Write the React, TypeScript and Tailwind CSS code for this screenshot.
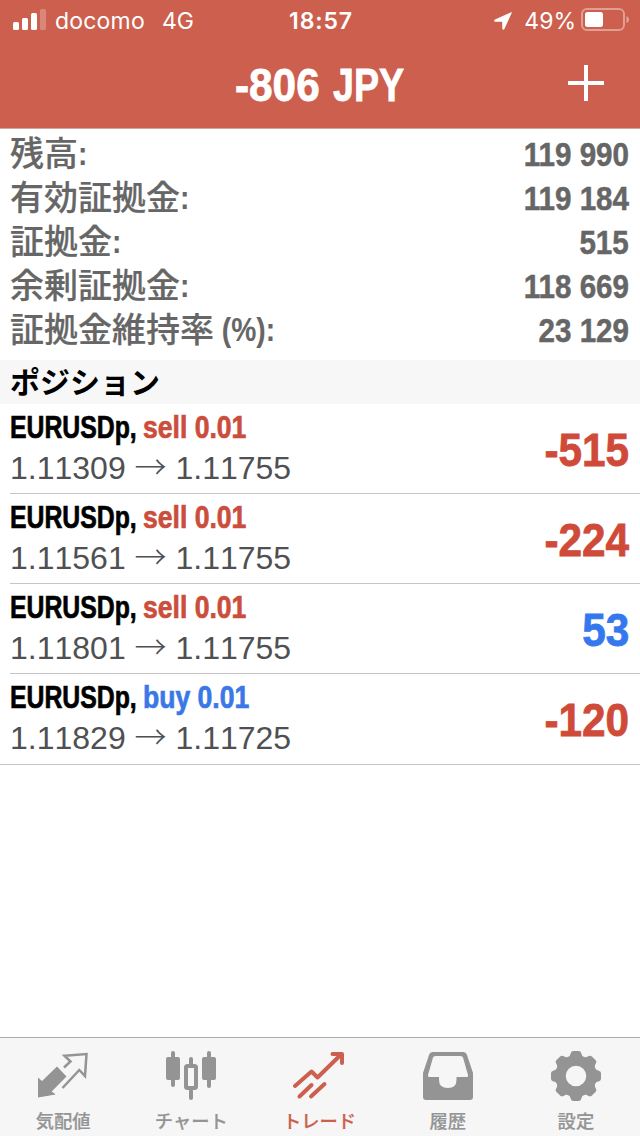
import React from 'react'

interface SummaryRow {
  label: string
  suffix: string
  value: string
}

interface Position {
  symbol: string
  side: 'sell' | 'buy'
  volume: string
  open: string
  current: string
  profit: number
}

const summary: SummaryRow[] = [
  { label: '残高', suffix: ':', value: '119 990' },
  { label: '有効証拠金', suffix: ':', value: '119 184' },
  { label: '証拠金', suffix: ':', value: '515' },
  { label: '余剰証拠金', suffix: ':', value: '118 669' },
  { label: '証拠金維持率', suffix: ' (%):', value: '23 129' },
]

const positions: Position[] = [
  { symbol: 'EURUSDp', side: 'sell', volume: '0.01', open: '1.11309', current: '1.11755', profit: -515 },
  { symbol: 'EURUSDp', side: 'sell', volume: '0.01', open: '1.11561', current: '1.11755', profit: -224 },
  { symbol: 'EURUSDp', side: 'sell', volume: '0.01', open: '1.11801', current: '1.11755', profit: 53 },
  { symbol: 'EURUSDp', side: 'buy', volume: '0.01', open: '1.11829', current: '1.11725', profit: -120 },
]

const StatusBar = () => (
  <div className="flex h-10 items-center justify-between pl-[13px] pr-[11px] font-['Inter',sans-serif] text-[23px]">
    <div className="flex w-[240px] items-center">
      <svg className="mr-[9px] h-[22px] w-[33px]" viewBox="0 0 33 22" fill="currentColor">
        <rect x="0" y="13" width="6" height="8" rx="1.5" />
        <rect x="9" y="9" width="6" height="12" rx="1.5" />
        <rect x="18" y="4" width="6" height="17" rx="1.5" />
        <rect x="27" y="0" width="6" height="21" rx="1.5" opacity="0.25" />
      </svg>
      <span className="mt-[2px] tracking-[0.2px]">docomo</span>
      <span className="ml-[17px] mt-[2px]">4G</span>
    </div>
    <span className="mt-[2px] font-semibold tracking-[0.9px]">18:57</span>
    <div className="flex w-[240px] items-center justify-end">
      <svg className="mr-[12px] mt-[2px] h-[18px] w-[18px]" viewBox="0 0 18 18" fill="currentColor">
        <path d="M17.2 0.2 L1 7.6 C-0.2 8.2 0.1 9.7 1.4 9.7 L8.2 9.8 L8.3 16.6 C8.3 17.9 9.8 18.2 10.4 17 L17.8 0.8 C18 0.3 17.7 0 17.2 0.2 Z" />
      </svg>
      <span className="mt-[2px]">49%</span>
      <svg className="ml-[5px] h-6 w-12" viewBox="0 0 48 24" fill="none">
        <rect x="1" y="1" width="42" height="21" rx="5" stroke="currentColor" strokeWidth="2" opacity="0.4" />
        <rect x="4" y="4" width="18" height="15" rx="2.5" fill="currentColor" />
        <path d="M45.5 8 Q48 9 48 11.5 Q48 14 45.5 15 Z" fill="currentColor" opacity="0.45" />
      </svg>
    </div>
  </div>
)

const NavBar = () => (
  <div className="flex h-[88px] items-center justify-between pl-[235px] pr-9 text-[47px] font-bold">
    <h1 className="flex whitespace-nowrap leading-[88px] pt-[2px] [-webkit-text-stroke:0.8px_currentColor]">
      <span className="w-[98px] origin-left scale-x-[.9]">-806</span>
      <span className="origin-left scale-x-[.8]">JPY</span>
    </h1>
    <svg className="mb-[2px] h-9 w-9" viewBox="0 0 36 36" stroke="currentColor" strokeWidth="4">
      <path d="M18 0V36M0 18H36" />
    </svg>
  </div>
)

const Summary = () => (
  <section className="h-[231px] pt-[3px] pl-[10px] pr-[11px] text-[34px] font-bold text-[#666]">
    {summary.map((row) => (
      <div key={row.label} className="flex h-11 items-center justify-between whitespace-nowrap leading-[44px]">
        <div className="flex">
          <span className="font-medium [-webkit-text-stroke:0.2px_currentColor]">{row.label}</span>
          <span className="-mt-px origin-left scale-x-[.83] whitespace-pre">{row.suffix}</span>
        </div>
        <span className="-mt-px origin-right scale-x-[.87] [-webkit-text-stroke:0.5px_currentColor]">{row.value}</span>
      </div>
    ))}
  </section>
)

const PositionRow = ({ position }: { position: Position }) => (
  <div className="flex items-center justify-between pr-[11px]">
    <div>
      <div className="flex h-[46px] whitespace-nowrap text-[32px] font-bold leading-[47px] [-webkit-text-stroke:0.7px_currentColor]">
        <span className="w-[133px] origin-left scale-x-[.775] text-black">{position.symbol},</span>
        <span className={`origin-left scale-x-[.83] ${position.side === 'sell' ? 'text-[#cb4e3d]' : 'text-[#3a78e8]'}`}>
          {position.side} {position.volume}
        </span>
      </div>
      <div className="-mt-px h-11 whitespace-nowrap text-[32px] leading-[36px] text-[#4f5053] [font-kerning:none]">
        {position.open} <span className="font-['Noto_Sans_CJK_JP',sans-serif] font-light leading-none">→</span> {position.current}
      </div>
    </div>
    <span
      className={`mt-px origin-right scale-x-[.9] text-[47px] font-bold leading-none [-webkit-text-stroke:0.8px_currentColor] ${
        position.profit < 0 ? 'text-[#cf4a38]' : 'text-[#3578ee]'
      }`}
    >
      {position.profit}
    </span>
  </div>
)

const QuotesIcon = () => (
  <svg className="h-[50px] w-[52px]" viewBox="0 0 52 50">
    <path d="M1 26.5 L5 30 L20 15.5 L29.5 25.5 L14.7 40.5 L18.7 43.5 L1 46.5 Z" fill="currentColor" />
    <path d="M27 16.5 L33.5 10.5 L27.5 4.7 L49.5 3 L48 25 L42.3 19 L25.5 37" fill="none" stroke="currentColor" strokeWidth="2.5" />
  </svg>
)

const ChartIcon = () => (
  <svg className="h-[50px] w-[52px]" viewBox="0 0 52 50" fill="currentColor">
    <rect x="6" y="0" width="4" height="36" rx="2" />
    <rect x="1" y="6" width="14" height="23" rx="2" />
    <rect x="42" y="0" width="4" height="37" rx="2" />
    <rect x="37" y="6" width="14" height="23" rx="2" />
    <rect x="24" y="6" width="4" height="9" rx="2" />
    <rect x="24" y="38" width="4" height="11" rx="2" />
    <rect x="21" y="15" width="10" height="22" rx="1.5" fill="none" stroke="currentColor" strokeWidth="4" />
  </svg>
)

const TradeIcon = () => (
  <svg className="h-[50px] w-[52px]" viewBox="0 0 52 50" fill="none" stroke="currentColor" strokeWidth="4" strokeLinecap="round" strokeLinejoin="round">
    <path d="M2 35 L18.5 20.5 L24.5 26.5 L47.5 4" />
    <path d="M39.5 3 H49 V12" />
    <path d="M6.5 45.5 L18.5 34 M18 45.5 L31.5 33" />
  </svg>
)

const HistoryIcon = () => (
  <svg className="h-[50px] w-[52px]" viewBox="0 0 52 50" fill="currentColor" fillRule="evenodd">
    <path d="M11 1 H41 Q44 1 45 4 L51 22 V46 Q51 49 48 49 H4 Q1 49 1 46 V22 L7 4 Q8 1 11 1 Z M13.5 5 Q11.5 5 11 6.5 L6 24 Q5.5 26 7.5 26 H17 V29 Q17 37 26 37 Q34.5 37 34.5 29 V26 H44 Q46.5 26 46 24 L41 6.5 Q40.5 5 38.5 5 Z" />
  </svg>
)

const SettingsIcon = () => (
  <svg className="h-[50px] w-[52px]" viewBox="-26 -25 52 50">
    <circle r="15.5" fill="none" stroke="currentColor" strokeWidth="10.5" />
    {[0, 45, 90, 135, 180, 225, 270, 315].map((angle) => (
      <path
        key={angle}
        d="M-9 -18 Q-6 -19 -5.5 -22 Q-5 -25 -2.5 -25 H2.5 Q5 -25 5.5 -22 Q6 -19 9 -18 Z"
        fill="currentColor"
        transform={`rotate(${angle})`}
      />
    ))}
  </svg>
)

const tabs = [
  { label: '気配値', icon: <QuotesIcon /> },
  { label: 'チャート', icon: <ChartIcon /> },
  { label: 'トレード', icon: <TradeIcon />, active: true },
  { label: '履歴', icon: <HistoryIcon /> },
  { label: '設定', icon: <SettingsIcon /> },
]

const TabBar = () => (
  <nav className="-ml-px grid h-[99px] grid-cols-5 border-t border-[#adadad] bg-[#f6f6f6]">
    {tabs.map((tab) => (
      <div
        key={tab.label}
        className={`flex flex-col items-center pt-[13px] ${tab.active ? 'text-[#cd5f4f]' : 'text-[#949494]'}`}
      >
        {tab.icon}
        <span className="mt-[6px] whitespace-nowrap font-['Noto_Sans_CJK_JP',sans-serif] text-[18.3px] font-medium leading-[26px] [-webkit-text-stroke:0.2px_currentColor]">
          {tab.label}
        </span>
      </div>
    ))}
  </nav>
)

export default function App() {
  return (
    <div className="flex h-[1136px] w-[640px] flex-col overflow-hidden bg-white font-['Liberation_Sans','Noto_Sans_CJK_JP',sans-serif]">
      <header className="h-[129px] border-b border-[#c9a79f] bg-[#cd5f4e] text-white">
        <StatusBar />
        <NavBar />
      </header>
      <Summary />
      <h2 className="h-11 bg-[#f7f7f7] pl-[10px] font-['Noto_Sans_CJK_JP',sans-serif] text-[30px] font-bold leading-[40px] text-black">
        ポジション
      </h2>
      <main className="flex-1">
        <ul className="border-b border-[#c5c5c8]">
          {positions.map((position, index) => (
            <li
              key={index}
              className={`ml-[10px] h-[90px] ${index < positions.length - 1 ? 'border-b border-[#c5c5c8]' : ''}`}
            >
              <PositionRow position={position} />
            </li>
          ))}
        </ul>
      </main>
      <TabBar />
    </div>
  )
}
